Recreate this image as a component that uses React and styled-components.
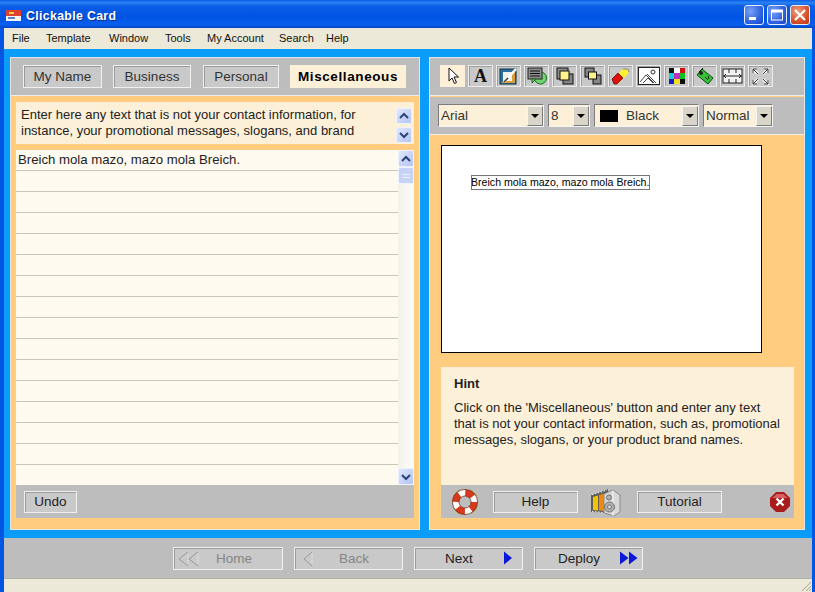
import React from "react";
import styled, { createGlobalStyle } from "styled-components";

const GlobalStyle = createGlobalStyle`
  html, body { margin: 0; padding: 0; background: #bdbdbd; }
  * { box-sizing: border-box; }
  #root { width: 815px; height: 592px; overflow: hidden; font-family: "Liberation Sans", Arial, sans-serif; color: #111; }
`;

const Frame = styled.div`
  width: 815px;
  height: 592px;
  display: flex;
  flex-direction: column;
  background: #0055e5;
  padding: 0 3px 0 4px;
`;

const TitleBar = styled.div`
  height: 28px;
  margin: 0 -3px 0 -4px;
  padding: 3px 5px 0 6px;
  display: flex;
  align-items: center;
  gap: 5px;
  background: linear-gradient(#0a5ee8 0%, #2a83f5 10%, #0a5de6 22%, #0054e3 60%, #0a5fee 88%, #0046c4 100%);
`;

const TitleText = styled.span`
  color: #fff;
  font-weight: bold;
  font-size: 12.3px;
  letter-spacing: 0.35px;
  text-shadow: 1px 1px 0 #0a2f90;
`;

const WinButtons = styled.div`
  margin-left: auto;
  margin-top: -2px;
  display: flex;
  gap: 3px;
`;

const WinButton = styled.div`
  width: 20px;
  height: 20px;
  border: 1px solid #e8eeff;
  border-radius: 3px;
  display: flex;
  align-items: center;
  justify-content: center;
  background: ${(p) =>
    p.$close
      ? "radial-gradient(circle at 35% 30%, #f0a080, #d8502a 60%, #b83510)"
      : "radial-gradient(circle at 30% 30%, #7aa2f5, #2f62e0 60%, #1c45c8)"};
`;

const MenuBar = styled.div`
  height: 21px;
  background: #ece9d8;
  display: flex;
  align-items: center;
  padding: 0 0 2px 8px;
  font-size: 11px;
`;

const MenuItem = styled.span`
  width: ${(p) => p.$w}px;
  white-space: nowrap;
`;

const Client = styled.div`
  flex: 1;
  min-height: 0;
  background: #0a9cfb;
  padding: 8px 7px 8px 6px;
  display: flex;
  gap: 9px;
`;

const Panel = styled.div`
  width: ${(p) => p.$w}px;
  border: 1px solid #e6e6e0;
  display: flex;
  flex-direction: column;
  background: #ffcc80;
`;

const Strip = styled.div`
  height: 38px;
  flex: none;
  background: #bdbdbd;
  border-bottom: 1px solid #eeeeee;
  margin-bottom: ${(p) => p.$mb ?? 0}px;
  display: flex;
  align-items: center;
  gap: ${(p) => p.$gap ?? 3}px;
  padding: 0 0 ${(p) => p.$pb ?? 0}px ${(p) => p.$pl ?? 10}px;
`;

const Tab = styled.div`
  width: ${(p) => p.$w}px;
  height: 23px;
  margin-right: ${(p) => p.$mr ?? 0}px;
  display: flex;
  align-items: center;
  justify-content: center;
  font-size: 13.5px;
  font-weight: ${(p) => (p.$active ? "bold" : "normal")};
  letter-spacing: ${(p) => (p.$active ? "0.6px" : "0")};
  color: ${(p) => (p.$active ? "#000" : "#333")};
  background: ${(p) => (p.$active ? "#fdf0d8" : "#c9c9c9")};
  border: 1px solid ${(p) => (p.$active ? "#fdf0d8" : "#f0f0f0")};
  box-shadow: ${(p) => (p.$active ? "none" : "inset 1px 1px 0 #9a9a9a")};
`;

const LeftBody = styled.div`
  flex: 1;
  min-height: 0;
  padding: 6px 5px 11px;
  display: flex;
  flex-direction: column;
`;

const Intro = styled.div`
  height: 42px;
  flex: none;
  background: #fdf0d8;
  display: flex;
  justify-content: space-between;
  padding: 5px 2px 0 5px;
  margin-bottom: 6px;
`;

const IntroText = styled.p`
  margin: 0;
  width: 372px;
  font-size: 13px;
  line-height: 16px;
  color: #222;
`;

const ScrollColumn = styled.div`
  display: flex;
  flex-direction: column;
  justify-content: ${(p) => (p.$spread ? "space-between" : "flex-start")};
  width: 16px;
  height: ${(p) => (p.$spread ? "35px" : "auto")};
  margin-top: ${(p) => (p.$spread ? "1px" : "0")};
  flex: none;
`;

const ScrollBtn = styled.div`
  width: 16px;
  height: ${(p) => (p.$small ? 16 : 17)}px;
  flex: none;
  border: 1px solid #eef2ff;
  border-radius: 2px;
  background: linear-gradient(135deg, #dfe7fd, #b4c5f2);
  display: flex;
  align-items: center;
  justify-content: center;
`;

const Sheet = styled.div`
  flex: 1;
  min-height: 0;
  display: flex;
  background: #fffaf0;
`;

const Lines = styled.div`
  flex: 1;
  overflow: hidden;
`;

const LineRow = styled.div`
  height: 21px;
  border-bottom: 1px solid #c9c5b8;
  padding-left: 2px;
  font-size: 13.2px;
  line-height: 20px;
  color: #222;
  &:last-child { border-bottom: none; }
`;

const Track = styled.div`
  flex: 1;
  background: linear-gradient(90deg, #f3f1ea, #fdfdfb);
`;

const Thumb = styled.div`
  height: 17px;
  flex: none;
  border: 1px solid #eef2ff;
  border-radius: 2px;
  background: repeating-linear-gradient(#c6d3f7 0 2px, #eef2ff 2px 3px) center / 8px 8px no-repeat, #c6d3f7;
`;

const FootStrip = styled.div`
  height: 33px;
  flex: none;
  background: #bdbdbd;
  display: flex;
  align-items: center;
  padding-left: ${(p) => p.$pl ?? 8}px;
`;

const PlainButton = styled.div`
  width: ${(p) => p.$w}px;
  height: 22px;
  flex: none;
  margin-left: ${(p) => p.$ml ?? 0}px;
  display: flex;
  align-items: center;
  justify-content: center;
  font-size: 13.5px;
  color: #222;
  background: #c9c9c9;
  border: 1px solid #f0f0f0;
  box-shadow: inset 1px 1px 0 #9a9a9a;
`;

const ToolButton = styled.div`
  width: 25px;
  height: 22px;
  flex: none;
  display: flex;
  align-items: center;
  justify-content: center;
  background: ${(p) => (p.$active ? "#fdf0d8" : "#c9c9c9")};
  border: 1px solid ${(p) => (p.$active ? "#fdf0d8" : "#ececec")};
  box-shadow: ${(p) => (p.$active ? "none" : "inset 1px 1px 0 #a0a0a0")};
`;

const BigA = styled.span`
  font-family: "Liberation Serif", serif;
  font-weight: bold;
  font-size: 18px;
  line-height: 1;
  color: #111;
`;

const Combo = styled.div`
  width: ${(p) => p.$w}px;
  height: 23px;
  flex: none;
  display: flex;
  align-items: center;
  background: #fdf0d8;
  border: 1px solid;
  border-color: #7c7c7c #f4f4f4 #f4f4f4 #7c7c7c;
  padding-left: 2px;
  font-size: 13.5px;
  color: #333;
`;

const ComboValue = styled.span`
  flex: 1;
  white-space: nowrap;
  overflow: hidden;
  display: flex;
  align-items: center;
  gap: 8px;
`;

const Swatch = styled.span`
  width: 18px;
  height: 12px;
  margin-left: 3px;
  background: #000;
`;

const ComboArrow = styled.span`
  width: 16px;
  height: 20px;
  flex: none;
  background: #d8d5c8;
  border: 1px solid;
  border-color: #f4f4f4 #7c7c7c #7c7c7c #f4f4f4;
  display: flex;
  align-items: center;
  justify-content: center;
  &::after {
    content: "";
    border: 4px solid transparent;
    border-top: 4px solid #000;
    border-bottom: none;
  }
`;

const RightBody = styled.div`
  flex: 1;
  min-height: 0;
  padding: 10px 10px 11px 11px;
  display: flex;
  flex-direction: column;
`;

const Canvas = styled.div`
  position: relative;
  width: 321px;
  height: 208px;
  flex: none;
  background: #fff;
  border: 1px solid #000;
  margin-bottom: 14px;
`;

const CanvasLabel = styled.div`
  position: absolute;
  left: 29px;
  top: 29px;
  width: 179px;
  height: 15px;
  border: 1px solid #777;
  overflow: hidden;
  text-indent: -1px;
  font-size: 10.6px;
  line-height: 13px;
  white-space: nowrap;
  color: #000;
`;

const HintBox = styled.div`
  flex: 1;
  min-height: 0;
  background: #fdf0d8;
  padding: 9px 11px 0 13px;
`;

const HintTitle = styled.div`
  font-weight: bold;
  font-size: 13px;
  line-height: 15px;
  margin-bottom: 9px;
  color: #222;
`;

const HintText = styled.p`
  margin: 0;
  font-size: 13px;
  line-height: 16px;
  color: #222;
`;

const CloseSlot = styled.span`
  margin-left: auto;
  margin-right: 4px;
  display: flex;
`;

const IconSlot = styled.span`
  display: flex;
  flex: none;
  margin-left: ${(p) => p.$ml ?? 0}px;
`;

const NavBar = styled.div`
  height: 40px;
  flex: none;
  background: #bdbdbd;
  display: flex;
  align-items: center;
  gap: 11px;
  padding-left: 169px;
`;

const NavButton = styled.div`
  position: relative;
  width: ${(p) => p.$w ?? 109}px;
  height: 23px;
  display: flex;
  align-items: center;
  padding-left: ${(p) => p.$pl}px;
  font-size: 13.5px;
  color: ${(p) => (p.$off ? "#858585" : "#222")};
  background: #c9c9c9;
  border: 1px solid #f0f0f0;
  box-shadow: inset 1px 1px 0 #9a9a9a;
`;

const NavIcon = styled.span`
  position: absolute;
  top: 2px;
  display: flex;
  left: ${(p) => p.$x}px;
`;

const StatusBar = styled.div`
  height: 14px;
  flex: none;
  background: #ece9d8;
  border-top: 1px solid #b5b2a0;
  display: flex;
  justify-content: flex-end;
  align-items: flex-end;
`;

const Arrow = ({ up }) => (
  <svg width="10" height="8" viewBox="0 0 10 8">
    <path d={up ? "M1 6 5 2 9 6" : "M1 2 5 6 9 2"} fill="none" stroke="#2a4378" strokeWidth="2" />
  </svg>
);

const cornerArrows = "M1 5V1h4M1 1l5 5M12 1h4v4M16 1l-5 5M1 12v4h4M1 16l5-5M16 12v4h-4M16 16l-5-5";

const tools = [
  <svg width="14" height="18" viewBox="0 0 14 18" key="a"><path d="M3 1v13l3-3 2.500 5.500 2-1L8 10h4.500z" fill="#fff" stroke="#111" /></svg>,
  <BigA key="b">A</BigA>,
  <svg width="19" height="18" viewBox="0 0 19 18" key="c">
    <rect x="1" y="2" width="16" height="15" fill="#2a6f9e" stroke="#134" />
    <path d="M2 16 16 3v13z" fill="#d8a040" />
    <rect x="4" y="5" width="9" height="9" fill="#f4f1e8" />
    <path d="M5 15 17 2" stroke="#fff" strokeWidth="2.500" />
    <path d="M5 15 9 11" stroke="#333" strokeWidth="1.500" />
  </svg>,
  <svg width="20" height="18" viewBox="0 0 20 18" key="d">
    <circle cx="13.500" cy="11" r="6" fill="#6fd66f" stroke="#1b6b1b" />
    <rect x="1" y="1" width="14" height="11" fill="#8d8d8d" stroke="#222" />
    <path d="M3 4h10M3 6.500h10M3 9h10" stroke="#111" />
    <path d="M5 12v4l4-4z" fill="#6fd66f" stroke="#1b6b1b" />
  </svg>,
  <svg width="18" height="18" viewBox="0 0 18 18" key="e">
    <rect x="7" y="7" width="10" height="10" fill="#858585" stroke="#111" />
    <rect x="1" y="1" width="11" height="11" fill="#8d8d8d" stroke="#111" />
    <rect x="4" y="4" width="9" height="9" fill="#fdf28c" stroke="#111" />
  </svg>,
  <svg width="18" height="18" viewBox="0 0 18 18" key="f">
    <rect x="1" y="1" width="9" height="9" fill="#858585" stroke="#111" />
    <rect x="9" y="8" width="8" height="9" fill="#858585" stroke="#111" />
    <rect x="4.500" y="5" width="8" height="7" fill="#fdf28c" stroke="#111" />
  </svg>,
  <svg width="20" height="18" viewBox="0 0 20 18" key="g">
    <path d="M1 12 12 2l6 0-1 5L7 17H3z" fill="#fdf030" />
    <path d="M1 12 7 6l5 5-6 6H3z" fill="#e01010" stroke="#400" strokeWidth=".7" />
    <path d="M12 2h5l1 3" fill="none" stroke="#888" />
  </svg>,
  <svg width="22" height="18" viewBox="0 0 22 18" key="h">
    <rect x=".5" y=".5" width="21" height="17" fill="#fff" stroke="#222" />
    <circle cx="15" cy="5" r="2" fill="none" stroke="#333" />
    <path d="M2 15 8 8l8 8M5 16l5-5 5 5M9 7l9 9" fill="none" stroke="#444" />
  </svg>,
  <svg width="16" height="16" viewBox="0 0 3 3" shapeRendering="crispEdges" key="i">
    <rect x="0" y="0" width="1" height="1" fill="#101010" />
    <rect x="1" y="0" width="1" height="1" fill="#fff" />
    <rect x="2" y="0" width="1" height="1" fill="#d01010" />
    <rect x="0" y="1" width="1" height="1" fill="#10d0d0" />
    <rect x="1" y="1" width="1" height="1" fill="#c030c0" />
    <rect x="2" y="1" width="1" height="1" fill="#10c020" />
    <rect x="0" y="2" width="1" height="1" fill="#1020c0" />
    <rect x="1" y="2" width="1" height="1" fill="#f0e020" />
    <rect x="2" y="2" width="1" height="1" fill="#101010" />
  </svg>,
  <svg width="20" height="18" viewBox="0 0 20 18" key="j">
    <path d="M2 8 7 2l11 9-5 6z" fill="#35c235" stroke="#0c4a0c" />
    <circle cx="6" cy="6" r="2" fill="#222" />
    <path d="M8 1 4 5M10 10l3 3M13 9l1 3" stroke="#111" />
  </svg>,
  <svg width="21" height="16" viewBox="0 0 21 16" key="k">
    <rect x="1" y="1" width="19" height="14" fill="#f2f2f2" stroke="#222" />
    <path d="M1 8h19M7 1v4M14 1v4M7 11v4M14 11v4" stroke="#222" />
    <path d="M4 6 2 8l2 2M17 6l2 2-2 2" fill="none" stroke="#222" />
  </svg>,
  <svg width="17" height="17" viewBox="0 0 17 17" key="l" fill="none">
    <path d={cornerArrows} stroke="#f4f4f4" strokeWidth="2.500" />
    <path d={cornerArrows} stroke="#333" />
  </svg>,
];

const LifeBuoy = () => (
  <svg width="28" height="28" viewBox="0 0 30 30">
    <path d="M3 9 9 3M21 3l6 6M27 21l-6 6M9 27l-6-6" stroke="#a8a820" strokeWidth="2.500" />
    <circle cx="15" cy="15" r="10" fill="none" stroke="#fff" strokeWidth="7" />
    <circle cx="15" cy="15" r="10" fill="none" stroke="#d8381c" strokeWidth="7" strokeDasharray="9 6.700" />
    <circle cx="15" cy="15" r="13.500" fill="none" stroke="#6b2a10" strokeWidth=".8" />
    <circle cx="15" cy="15" r="6.500" fill="none" stroke="#6b2a10" strokeWidth=".8" />
  </svg>
);

const FilmSpeaker = () => (
  <svg width="30" height="30" viewBox="0 0 30 30">
    <path d="M0 8 17 2v24L0 25z" fill="#5c5c5c" />
    <path d="M1 7.500 16 3M1 24.500 16 26" stroke="#e0e0e0" strokeWidth="1.500" strokeDasharray="1.500 1.500" />
    <path d="M2 10 7 8.500v15L2 23z" fill="#f5c400" />
    <path d="M8 8 13 6.500v17.500L8 23.500z" fill="#ee8a10" />
    <path d="M13 7 22 3l7 5v17l-6 4-10-3z" fill="#d8d8d8" stroke="#8a8a8a" />
    <path d="M22 3.500V29" stroke="#f4f4f4" />
    <circle cx="18.500" cy="20" r="5" fill="#b0b0b0" stroke="#707070" />
    <circle cx="18.500" cy="20" r="2" fill="#ddd" stroke="#707070" />
    <circle cx="18" cy="10.500" r="2.500" fill="#b0b0b0" stroke="#707070" />
  </svg>
);

const CloseBadge = () => (
  <svg width="20" height="20" viewBox="0 0 20 20">
    <path d="M6 0h8l6 6v8l-6 6H6l-6-6V6z" fill="#a81c1c" />
    <path d="M6.500 2h7l4 4H2.500z" fill="#d86060" />
    <path d="M6.500 6.500l7 7M13.500 6.500l-7 7" stroke="#fff" strokeWidth="2.400" />
  </svg>
);

const CardIcon = () => (
  <svg width="15" height="11" viewBox="0 0 15 11">
    <rect x="0" y="0" width="15" height="11" fill="#f4f4f4" />
    <rect x="0" y="0" width="15" height="6" fill="#e04030" />
    <rect x="3" y="2" width="5" height="2" fill="#ffd040" />
    <rect x="2" y="7" width="7" height="2" fill="#6080d0" />
  </svg>
);

const rows = Array.from({ length: 16 }, (_, i) => i);

export default function App() {
  return (
    <>
      <GlobalStyle />
      <Frame>
        <TitleBar>
          <CardIcon />
          <TitleText>Clickable Card</TitleText>
          <WinButtons>
            <WinButton>
              <svg width="14" height="14" viewBox="0 0 14 14"><rect x="2" y="9" width="7" height="3" fill="#fff" /></svg>
            </WinButton>
            <WinButton>
              <svg width="14" height="14" viewBox="0 0 14 14"><rect x="1.500" y="2" width="11" height="10" fill="none" stroke="#fff" /><rect x="1.500" y="2" width="11" height="2.500" fill="#fff" /></svg>
            </WinButton>
            <WinButton $close>
              <svg width="14" height="14" viewBox="0 0 14 14"><path d="M2 2l10 10M12 2 2 12" stroke="#fff" strokeWidth="2.200" /></svg>
            </WinButton>
          </WinButtons>
        </TitleBar>
        <MenuBar>
          <MenuItem $w={34}>File</MenuItem>
          <MenuItem $w={63}>Template</MenuItem>
          <MenuItem $w={56}>Window</MenuItem>
          <MenuItem $w={42}>Tools</MenuItem>
          <MenuItem $w={72}>My Account</MenuItem>
          <MenuItem $w={47}>Search</MenuItem>
          <MenuItem $w={40}>Help</MenuItem>
        </MenuBar>
        <Client>
          <Panel $w={410}>
            <Strip $pl={12} $gap={0} $pb={1}>
              <Tab $w={79} $mr={11}>My Name</Tab>
              <Tab $w={78} $mr={12}>Business</Tab>
              <Tab $w={76} $mr={11}>Personal</Tab>
              <Tab $w={116} $active>Miscellaneous</Tab>
            </Strip>
            <LeftBody>
              <Intro>
                <IntroText>
                  Enter here any text that is not your contact information, for instance, your promotional messages, slogans, and brand
                </IntroText>
                <ScrollColumn $spread>
                  <ScrollBtn $small><Arrow up /></ScrollBtn>
                  <ScrollBtn $small><Arrow /></ScrollBtn>
                </ScrollColumn>
              </Intro>
              <Sheet>
                <Lines>
                  {rows.map((i) => (
                    <LineRow key={i}>{i === 0 ? "Breich mola mazo, mazo mola Breich." : ""}</LineRow>
                  ))}
                </Lines>
                <ScrollColumn>
                  <ScrollBtn><Arrow up /></ScrollBtn>
                  <Thumb />
                  <Track />
                  <ScrollBtn><Arrow /></ScrollBtn>
                </ScrollColumn>
              </Sheet>
              <FootStrip>
                <PlainButton $w={53}>Undo</PlainButton>
              </FootStrip>
            </LeftBody>
          </Panel>
          <Panel $w={376}>
            <Strip $mb={1} $pb={1}>
              {tools.map((icon, i) => (
                <ToolButton key={i} $active={i === 0}>{icon}</ToolButton>
              ))}
            </Strip>
            <Strip $pl={8} $gap={4}>
              <Combo $w={106}>
                <ComboValue>Arial</ComboValue>
                <ComboArrow />
              </Combo>
              <Combo $w={42}>
                <ComboValue>8</ComboValue>
                <ComboArrow />
              </Combo>
              <Combo $w={105}>
                <ComboValue><Swatch />Black</ComboValue>
                <ComboArrow />
              </Combo>
              <Combo $w={70}>
                <ComboValue>Normal</ComboValue>
                <ComboArrow />
              </Combo>
            </Strip>
            <RightBody>
              <Canvas>
                <CanvasLabel>Breich mola mazo, mazo mola Breich.</CanvasLabel>
              </Canvas>
              <HintBox>
                <HintTitle>Hint</HintTitle>
                <HintText>
                  Click on the 'Miscellaneous' button and enter any text that is not your contact information, such as, promotional messages, slogans, or your product brand names.
                </HintText>
              </HintBox>
              <FootStrip $pl={10}>
                <IconSlot><LifeBuoy /></IconSlot>
                <PlainButton $w={85} $ml={14}>Help</PlainButton>
                <IconSlot $ml={13}><FilmSpeaker /></IconSlot>
                <PlainButton $w={85} $ml={16}>Tutorial</PlainButton>
                <CloseSlot><CloseBadge /></CloseSlot>
              </FootStrip>
            </RightBody>
          </Panel>
        </Client>
        <NavBar>
          <NavButton $off $w={110} $pl={42}>
            <NavIcon $x={2}>
              <svg width="26" height="18" viewBox="0 0 26 18" fill="none" stroke="#9a9a9a"><path d="M12 2 3 9l9 7M22 2l-9 7 9 7" /><path d="M12 4v10M22 4v10" strokeDasharray="1 1" stroke="#eee" /></svg>
            </NavIcon>
            Home
          </NavButton>
          <NavButton $off $pl={44}>
            <NavIcon $x={7}>
              <svg width="12" height="18" viewBox="0 0 12 18" fill="none" stroke="#9a9a9a"><path d="M10 2 2 9l8 7" /><path d="M10 4v10" strokeDasharray="1 1" stroke="#eee" /></svg>
            </NavIcon>
            Back
          </NavButton>
          <NavButton $pl={30}>
            Next
            <NavIcon $x={88}>
              <svg width="10" height="16" viewBox="0 0 10 16"><path d="M1 1.500 9 8l-8 6.500z" fill="#0a18d8" /></svg>
            </NavIcon>
          </NavButton>
          <NavButton $pl={23}>
            Deploy
            <NavIcon $x={85}>
              <svg width="18" height="16" viewBox="0 0 18 16"><path d="M0 1.500 8.500 8 0 14.500zM9 1.500 17.500 8 9 14.500z" fill="#0a18d8" /></svg>
            </NavIcon>
          </NavButton>
        </NavBar>
        <StatusBar>
          <svg width="12" height="12" viewBox="0 0 12 12" stroke="#a8a594"><path d="M11 2 2 11M11 6l-5 5M11 9l-2 2" /></svg>
        </StatusBar>
      </Frame>
    </>
  );
}
